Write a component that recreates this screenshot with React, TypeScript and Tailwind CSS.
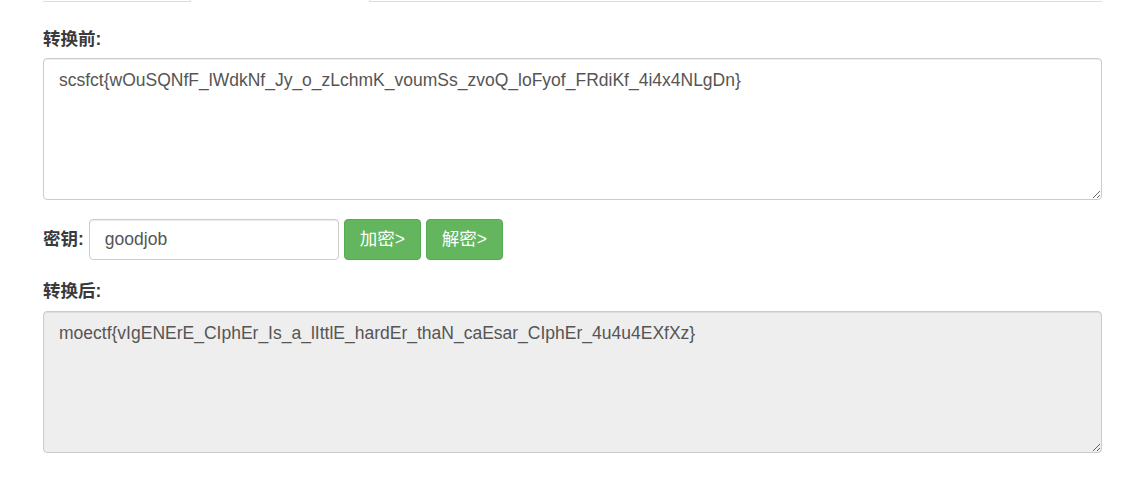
import React from 'react'

const font = { fontFamily: '"Liberation Sans", "Noto Sans CJK SC", Arial, sans-serif' }

export default function App() {
  return (
    <div className="min-h-[480px] w-[1134px] bg-white pl-[43px] pr-[32px] text-[17.5px] text-[#333]" style={font}>
      {/* bottom edge of the tab bar */}
      <div className="flex h-[2px]">
        <div className="w-[147px] border-b border-[#ddd]" />
        <div className="w-[180px] border-x border-[#ddd]" />
        <div className="flex-1 border-b border-[#ddd]" />
      </div>

      <div className="pt-[26px]">
        <label className="mb-[8px] block h-[22px] font-bold leading-[22px] text-[#3a3a3a]">转换前:</label>
        <textarea
          className="block h-[142px] w-full rounded-[4px] border border-[#ccc] px-[15px] py-[10px] leading-[23px] text-[#555] shadow-[inset_0_1px_1px_rgba(0,0,0,0.075)] outline-none"
          defaultValue="scsfct{wOuSQNfF_lWdkNf_Jy_o_zLchmK_voumSs_zvoQ_loFyof_FRdiKf_4i4x4NLgDn}"
        />
      </div>

      <div className="mt-[19px] flex items-center gap-[5px]">
        <span className="font-bold text-[#3a3a3a]">密钥:</span>
        <input
          className="h-[41px] w-[250px] rounded-[4px] border border-[#ccc] px-[15px] text-[#555] shadow-[inset_0_1px_1px_rgba(0,0,0,0.075)] outline-none"
          defaultValue="goodjob"
        />
        <button className="h-[41px] w-[77px] rounded-[4px] border border-[#57ab54] bg-[#63b65d] text-white">加密&gt;</button>
        <button className="h-[41px] w-[77px] rounded-[4px] border border-[#57ab54] bg-[#63b65d] text-white">解密&gt;</button>
      </div>

      <div className="pt-[20px]">
        <label className="mb-[9px] block h-[22px] font-bold leading-[22px] text-[#3a3a3a]">转换后:</label>
        <textarea
          readOnly
          className="block h-[142px] w-full rounded-[4px] border border-[#ccc] bg-[#eee] px-[15px] py-[10px] leading-[23px] text-[#555] shadow-[inset_0_1px_1px_rgba(0,0,0,0.075)] outline-none"
          defaultValue="moectf{vIgENErE_CIphEr_Is_a_lIttlE_hardEr_thaN_caEsar_CIphEr_4u4u4EXfXz}"
        />
      </div>
    </div>
  )
}
